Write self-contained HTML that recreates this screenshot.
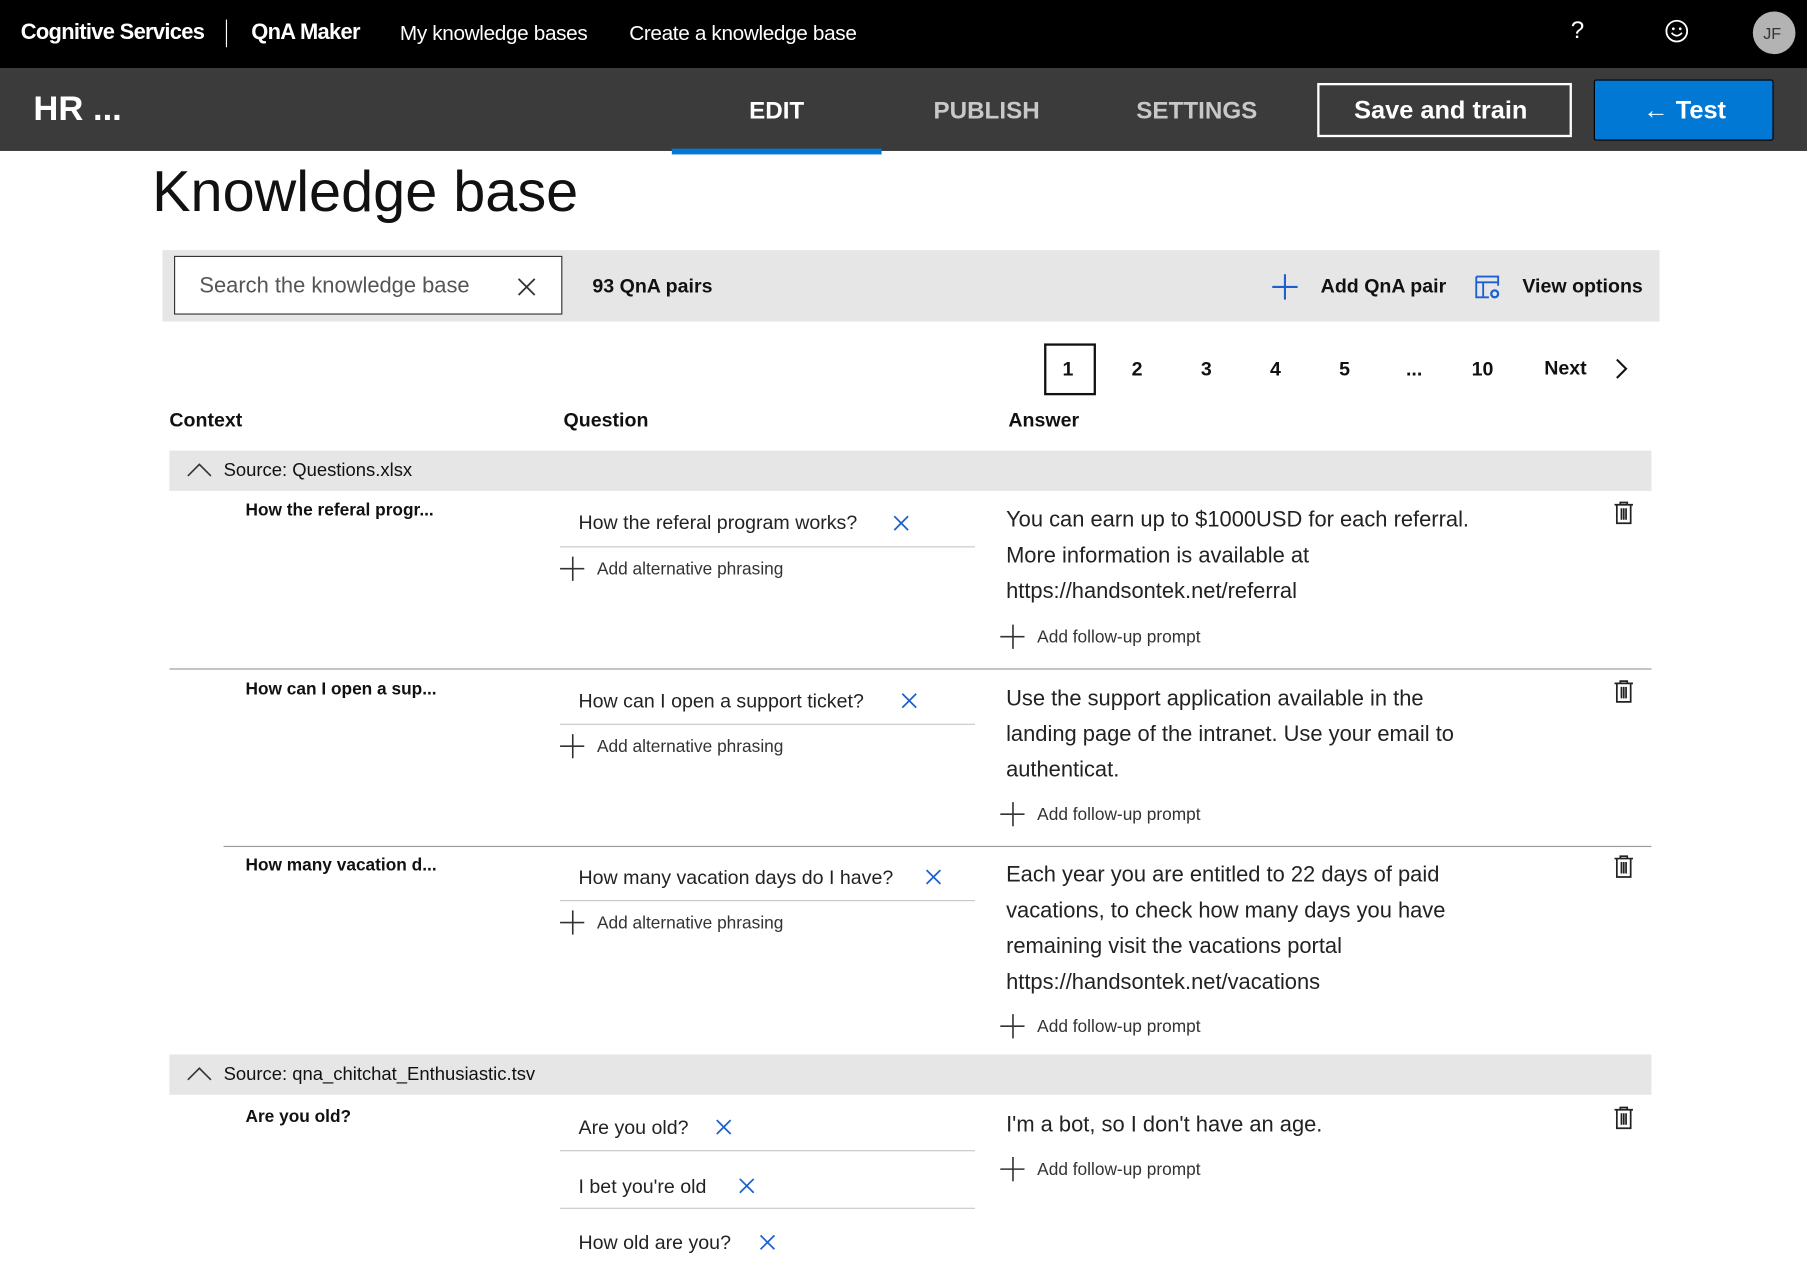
<!DOCTYPE html>
<html><head><meta charset="utf-8"><style>
html,body{margin:0;padding:0;background:#fff;overflow:hidden}
body{width:1807px;height:1266px}
#w{position:absolute;left:0;top:0;width:1568px;height:1099px;transform:scale(1.15242);transform-origin:0 0;font-family:"Liberation Sans",sans-serif;color:#111}
.a{position:absolute;white-space:nowrap}
.c{position:absolute;white-space:nowrap;transform:translateY(-50%)}
.b{font-weight:bold}
svg{position:absolute;overflow:visible}
.ln{position:absolute;height:1px;background:#c8c8c8}
</style></head><body><div id="w">
<div class="a" style="left:0;top:0;width:1568px;height:59px;background:#000"></div>
<div class="c b" style="left:18px;top:29px;color:#fff;font-size:19px;letter-spacing:-0.6px">Cognitive Services</div>
<div class="a" style="left:196px;top:17px;width:1px;height:24px;background:#fff"></div>
<div class="c b" style="left:218px;top:29px;color:#fff;font-size:19px;letter-spacing:-0.6px">QnA Maker</div>
<div class="c" style="left:347px;top:29px;color:#fff;font-size:18px;letter-spacing:-0.3px">My knowledge bases</div>
<div class="c" style="left:546px;top:29px;color:#fff;font-size:18px;letter-spacing:-0.3px">Create a knowledge base</div>
<div class="c" style="left:1363px;top:27px;color:#fff;font-size:21px">?</div>
<svg style="left:1444px;top:16px" width="22" height="22" viewBox="0 0 22 22"><circle cx="11" cy="11" r="9" fill="none" stroke="#fff" stroke-width="1.6"/><circle cx="8" cy="9" r="1.2" fill="#fff"/><circle cx="14" cy="9" r="1.2" fill="#fff"/><path d="M6.5 12.5 Q11 17.5 15.5 12.5" fill="none" stroke="#fff" stroke-width="1.5"/></svg>
<div class="a" style="left:1521px;top:10px;width:37px;height:37px;border-radius:50%;background:#b3b3b3"></div>
<div class="c" style="left:1530px;top:29px;color:#333;font-size:14px">JF</div>

<div class="a" style="left:0;top:59px;width:1568px;height:72px;background:#3b3b3b"></div>
<div class="c b" style="left:29px;top:95px;color:#fff;font-size:30px">HR ...</div>
<div class="c b" style="left:650px;top:97px;color:#fff;font-size:21px">EDIT</div>
<div class="c b" style="left:810px;top:97px;color:#c8c8c8;font-size:21px">PUBLISH</div>
<div class="c b" style="left:986px;top:97px;color:#c8c8c8;font-size:21px">SETTINGS</div>
<div class="a" style="left:583px;top:129px;width:182px;height:5px;background:#0078d4"></div>
<div class="a" style="left:1143px;top:72px;width:217px;height:43px;border:2px solid #fff"></div>
<div class="c b" style="left:1175px;top:96px;color:#fff;font-size:22px">Save and train</div>
<div class="a" style="left:1383px;top:69px;width:154px;height:51px;background:#0078d4;border:1px solid #000;border-radius:2px"></div>
<div class="c b" style="left:1426px;top:96px;color:#fff;font-size:22px">← Test</div>

<div class="c" style="left:132px;top:166px;font-size:50px;color:#111">Knowledge base</div>

<div class="a" style="left:141px;top:217px;width:1299px;height:62px;background:#e6e6e6"></div>
<div class="a" style="left:151px;top:222px;width:335px;height:49px;background:#fff;border:1px solid #333"></div>
<div class="c" style="left:173px;top:249px;font-size:19px;color:#555">Search the knowledge base</div>
<svg style="left:449px;top:241px" width="16" height="16"><path d="M1 1L15 15M15 1L1 15" stroke="#333" stroke-width="1.6"/></svg>
<div class="c b" style="left:514px;top:249px;font-size:17px">93 QnA pairs</div>
<svg style="left:1103px;top:237px" width="24" height="24"><path d="M12 1V23M1 12H23" stroke="#1b5fd0" stroke-width="1.8"/></svg>
<div class="c b" style="left:1146px;top:249px;font-size:17px">Add QnA pair</div>
<svg style="left:1280px;top:238px" width="22" height="22"><path d="M1 2H20V10M1 2V20H12M1 7H20M7 7V20" fill="none" stroke="#1b5fd0" stroke-width="1.6"/><circle cx="17" cy="17" r="3" fill="none" stroke="#1b5fd0" stroke-width="2"/></svg>
<div class="c b" style="left:1321px;top:249px;font-size:17px">View options</div>

<div class="a" style="left:906px;top:298px;width:41px;height:41px;border:2px solid #111"></div>
<div class="c b" style="left:922px;top:321px;font-size:17px">1</div>
<div class="c b" style="left:982px;top:321px;font-size:17px">2</div>
<div class="c b" style="left:1042px;top:321px;font-size:17px">3</div>
<div class="c b" style="left:1102px;top:321px;font-size:17px">4</div>
<div class="c b" style="left:1162px;top:321px;font-size:17px">5</div>
<div class="c b" style="left:1220px;top:321px;font-size:17px">...</div>
<div class="c b" style="left:1277px;top:321px;font-size:17px">10</div>
<div class="c b" style="left:1340px;top:320px;font-size:17px">Next</div>
<svg style="left:1401px;top:311px" width="12" height="18"><path d="M2 1L10 9L2 17" fill="none" stroke="#111" stroke-width="1.8"/></svg>

<div class="c b" style="left:147px;top:365px;font-size:17px">Context</div>
<div class="c b" style="left:489px;top:365px;font-size:17px">Question</div>
<div class="c b" style="left:875px;top:365px;font-size:17px">Answer</div>

<div class="a" style="left:147px;top:391px;width:1286px;height:35px;background:#e6e6e6"></div>
<svg style="left:162px;top:401px" width="22" height="14"><path d="M1 12L11 2L21 12" fill="none" stroke="#333" stroke-width="1.4"/></svg>
<div class="c" style="left:194px;top:409px;font-size:16px">Source: Questions.xlsx</div>

<!-- row 1 -->
<div class="c b" style="left:213px;top:443px;font-size:15px">How the referal progr...</div>
<div class="c" style="left:502px;top:454px;font-size:17px;color:#222">How the referal program works?</div>
<svg style="left:775px;top:447px" width="14" height="14"><path d="M1 1L13 13M13 1L1 13" stroke="#1b5fd0" stroke-width="1.5"/></svg>
<div class="ln" style="left:486px;top:474px;width:360px"></div>
<svg style="left:486px;top:483px" width="22" height="22"><path d="M11 0V21M0 10.5H21" stroke="#333" stroke-width="1.4"/></svg>
<div class="c" style="left:518px;top:494px;font-size:15px;color:#333">Add alternative phrasing</div>
<div class="a" style="left:873px;top:436px;font-size:19px;line-height:31px;color:#222">You can earn up to $1000USD for each referral.<br>More information is available at<br>https://handsontek.net/referral</div>
<svg style="left:868px;top:542px" width="22" height="22"><path d="M11 0V21M0 10.5H21" stroke="#333" stroke-width="1.4"/></svg>
<div class="c" style="left:900px;top:553px;font-size:15px;color:#333">Add follow-up prompt</div>
<svg style="left:1400px;top:435px" width="18" height="20"><path d="M1 3H17M6 3V1H12V3M3 3V19H15V3M7 6V16M9 6V16M11 6V16" fill="none" stroke="#222" stroke-width="1.5"/></svg>
<div class="ln" style="left:147px;top:580px;width:1286px;background:#999"></div>

<!-- row 2 -->
<div class="c b" style="left:213px;top:598px;font-size:15px">How can I open a sup...</div>
<div class="c" style="left:502px;top:609px;font-size:17px;color:#222">How can I open a support ticket?</div>
<svg style="left:782px;top:601px" width="14" height="14"><path d="M1 1L13 13M13 1L1 13" stroke="#1b5fd0" stroke-width="1.5"/></svg>
<div class="ln" style="left:486px;top:628px;width:360px"></div>
<svg style="left:486px;top:637px" width="22" height="22"><path d="M11 0V21M0 10.5H21" stroke="#333" stroke-width="1.4"/></svg>
<div class="c" style="left:518px;top:648px;font-size:15px;color:#333">Add alternative phrasing</div>
<div class="a" style="left:873px;top:591px;font-size:19px;line-height:31px;color:#222">Use the support application available in the<br>landing page of the intranet. Use your email to<br>authenticat.</div>
<svg style="left:868px;top:696px" width="22" height="22"><path d="M11 0V21M0 10.5H21" stroke="#333" stroke-width="1.4"/></svg>
<div class="c" style="left:900px;top:707px;font-size:15px;color:#333">Add follow-up prompt</div>
<svg style="left:1400px;top:590px" width="18" height="20"><path d="M1 3H17M6 3V1H12V3M3 3V19H15V3M7 6V16M9 6V16M11 6V16" fill="none" stroke="#222" stroke-width="1.5"/></svg>
<div class="ln" style="left:194px;top:734px;width:1239px;background:#999"></div>

<!-- row 3 -->
<div class="c b" style="left:213px;top:751px;font-size:15px">How many vacation d...</div>
<div class="c" style="left:502px;top:762px;font-size:17px;color:#222">How many vacation days do I have?</div>
<svg style="left:803px;top:754px" width="14" height="14"><path d="M1 1L13 13M13 1L1 13" stroke="#1b5fd0" stroke-width="1.5"/></svg>
<div class="ln" style="left:486px;top:781px;width:360px"></div>
<svg style="left:486px;top:790px" width="22" height="22"><path d="M11 0V21M0 10.5H21" stroke="#333" stroke-width="1.4"/></svg>
<div class="c" style="left:518px;top:801px;font-size:15px;color:#333">Add alternative phrasing</div>
<div class="a" style="left:873px;top:744px;font-size:19px;line-height:31px;color:#222">Each year you are entitled to 22 days of paid<br>vacations, to check how many days you have<br>remaining visit the vacations portal<br>https://handsontek.net/vacations</div>
<svg style="left:868px;top:880px" width="22" height="22"><path d="M11 0V21M0 10.5H21" stroke="#333" stroke-width="1.4"/></svg>
<div class="c" style="left:900px;top:891px;font-size:15px;color:#333">Add follow-up prompt</div>
<svg style="left:1400px;top:742px" width="18" height="20"><path d="M1 3H17M6 3V1H12V3M3 3V19H15V3M7 6V16M9 6V16M11 6V16" fill="none" stroke="#222" stroke-width="1.5"/></svg>

<div class="a" style="left:147px;top:915px;width:1286px;height:35px;background:#e6e6e6"></div>
<svg style="left:162px;top:925px" width="22" height="14"><path d="M1 12L11 2L21 12" fill="none" stroke="#333" stroke-width="1.4"/></svg>
<div class="c" style="left:194px;top:933px;font-size:16px">Source: qna_chitchat_Enthusiastic.tsv</div>

<!-- row 4 -->
<div class="c b" style="left:213px;top:969px;font-size:15px">Are you old?</div>
<div class="c" style="left:502px;top:979px;font-size:17px;color:#222">Are you old?</div>
<svg style="left:621px;top:971px" width="14" height="14"><path d="M1 1L13 13M13 1L1 13" stroke="#1b5fd0" stroke-width="1.5"/></svg>
<div class="ln" style="left:486px;top:998px;width:360px"></div>
<div class="c" style="left:502px;top:1030px;font-size:17px;color:#222">I bet you're old</div>
<svg style="left:641px;top:1022px" width="14" height="14"><path d="M1 1L13 13M13 1L1 13" stroke="#1b5fd0" stroke-width="1.5"/></svg>
<div class="ln" style="left:486px;top:1048px;width:360px"></div>
<div class="c" style="left:502px;top:1079px;font-size:17px;color:#222">How old are you?</div>
<svg style="left:659px;top:1071px" width="14" height="14"><path d="M1 1L13 13M13 1L1 13" stroke="#1b5fd0" stroke-width="1.5"/></svg>
<div class="c" style="left:873px;top:977px;font-size:19px;color:#222">I'm a bot, so I don't have an age.</div>
<svg style="left:868px;top:1004px" width="22" height="22"><path d="M11 0V21M0 10.5H21" stroke="#333" stroke-width="1.4"/></svg>
<div class="c" style="left:900px;top:1015px;font-size:15px;color:#333">Add follow-up prompt</div>
<svg style="left:1400px;top:960px" width="18" height="20"><path d="M1 3H17M6 3V1H12V3M3 3V19H15V3M7 6V16M9 6V16M11 6V16" fill="none" stroke="#222" stroke-width="1.5"/></svg>
</div></body></html>
